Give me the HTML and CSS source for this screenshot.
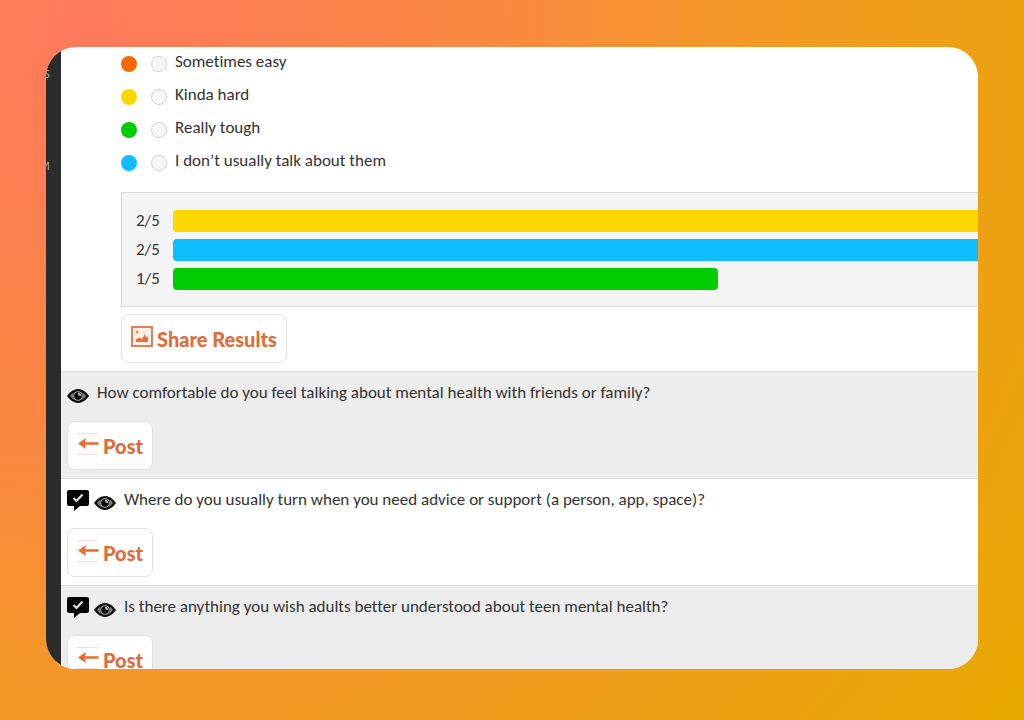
FILE: index.html
```html
<!DOCTYPE html>
<html lang="en">
<head>
    <meta charset="UTF-8" />
    <meta name="viewport" content="width=device-width, initial-scale=1.0" />
    <title>Poll Results</title>
    <link rel="stylesheet" href="styles.css">
</head>
<body>
    <!-- Shared icons -->
    <svg class="icon-defs" width="0" height="0" aria-hidden="true">
        <symbol id="icon-eye" viewBox="0 0 22 16">
            <path d="M0 8 Q5 1 11 1 T22 8 Q17 15 11 15 T0 8Z" fill="#0a0a0a" />
            <path d="M3 8 Q4 5.500 6.500 4.500 Q5 8 7.500 12 Q5 11 3 8Z M19 8 Q18 5.500 15.500 4.500 Q17 8 14.500 12 Q17 11 19 8Z" fill="#777" />
            <circle cx="11" cy="8" r="4.200" fill="none" stroke="#bbb" stroke-width="1.2" />
            <circle cx="11" cy="8" r="3.700" fill="#0a0a0a" />
            <path d="M11 4.500 Q14 5 14.300 8 L11.500 7.500Z" fill="#ccc" />
        </symbol>
        <symbol id="icon-check" viewBox="0 0 22 21">
            <path d="M2 0 H20 Q22 0 22 2 V14 Q22 16 20 16 H13 L7 21 V16 H2 Q0 16 0 14 V2 Q0 0 2 0Z" fill="#050505" />
            <path d="M6.500 8 L9.500 11 L15.500 4.500" fill="none" stroke="#e6e6e6" stroke-width="2" />
        </symbol>
        <symbol id="icon-arrow" viewBox="0 0 22 22">
            <path d="M0 .5 H21 M0 21.500 H21" stroke="#f5ded4" />
            <path d="M1 10.500 L9 5 L8 9.200 H21.500 V11.800 H8 L9 16Z" fill="#e96b30" />
        </symbol>
    </svg>

    <div class="window">
        <nav class="sidebar">
            <span>S</span>
            <span>M</span>
        </nav>

        <main class="feed">
            <section class="poll">
                <div class="option">
                    <span class="dot orange"></span>
                    <input type="radio" name="answer" id="answer-1" />
                    <label for="answer-1">Sometimes easy</label>
                </div>
                <div class="option">
                    <span class="dot yellow"></span>
                    <input type="radio" name="answer" id="answer-2" />
                    <label for="answer-2">Kinda hard</label>
                </div>
                <div class="option">
                    <span class="dot green"></span>
                    <input type="radio" name="answer" id="answer-3" />
                    <label for="answer-3">Really tough</label>
                </div>
                <div class="option">
                    <span class="dot blue"></span>
                    <input type="radio" name="answer" id="answer-4" />
                    <label for="answer-4">I don’t usually talk about them</label>
                </div>

                <div class="results">
                    <div class="result">
                        <span class="count">2/5</span>
                        <div class="track"><div class="bar yellow" style="width: 100%"></div></div>
                    </div>
                    <div class="result">
                        <span class="count">2/5</span>
                        <div class="track"><div class="bar blue" style="width: 100%"></div></div>
                    </div>
                    <div class="result">
                        <span class="count">1/5</span>
                        <div class="track"><div class="bar green" style="width: 50%"></div></div>
                    </div>
                </div>

                <button type="button" class="btn">
                    <svg width="22" height="22" viewBox="0 0 22 22" aria-hidden="true">
                        <rect x="1" y="1" width="20" height="19" fill="#fff0e8" stroke="#dd7448" stroke-width="1.8" />
                        <circle cx="6" cy="6" r="1.500" fill="#e58a63" />
                        <path d="M5 16 V13.500 L8 11.500 L11 13 L14 8 L15 12 L17 10 V16Z" fill="#e2703f" />
                    </svg>
                    Share Results
                </button>
            </section>

            <section class="question shaded">
                <div class="question-line">
                    <svg class="eye" width="22" height="16" aria-hidden="true"><use href="#icon-eye" /></svg>
                    <p>How comfortable do you feel talking about mental health with friends or family?</p>
                </div>
                <button type="button" class="btn">
                    <svg width="22" height="22" aria-hidden="true"><use href="#icon-arrow" /></svg>
                    Post
                </button>
            </section>

            <section class="question">
                <div class="question-line">
                    <svg width="22" height="21" aria-hidden="true"><use href="#icon-check" /></svg>
                    <svg class="eye" width="22" height="16" aria-hidden="true"><use href="#icon-eye" /></svg>
                    <p>Where do you usually turn when you need advice or support (a person, app, space)?</p>
                </div>
                <button type="button" class="btn">
                    <svg width="22" height="22" aria-hidden="true"><use href="#icon-arrow" /></svg>
                    Post
                </button>
            </section>

            <section class="question shaded">
                <div class="question-line">
                    <svg width="22" height="21" aria-hidden="true"><use href="#icon-check" /></svg>
                    <svg class="eye" width="22" height="16" aria-hidden="true"><use href="#icon-eye" /></svg>
                    <p>Is there anything you wish adults better understood about teen mental health?</p>
                </div>
                <button type="button" class="btn">
                    <svg width="22" height="22" aria-hidden="true"><use href="#icon-arrow" /></svg>
                    Post
                </button>
            </section>
        </main>
    </div>
</body>
</html>
```

FILE: styles.css
```css
* {
    box-sizing: border-box;
}

body {
    margin: 0;
    padding: 47px 46px 51px;
    height: 100vh;
    display: flex;
    font-family: Carlito, Lato, sans-serif;
    font-size: 17px;
    line-height: 20px;
    font-variant-ligatures: none;
    color: #333;
    background: radial-gradient(circle at 8% 5%, #ff795c 0%, #fa8a40 36%, #f39a24 59%, #eda112 81%, #e8aa00 100%);
}

.icon-defs {
    display: none;
}

/* Rounded window, cuts off whatever runs past it */
.window {
    flex: 1;
    min-width: 0;
    display: flex;
    overflow: hidden;
    border-radius: 30px;
    background: #fff;
}

/* Left strip */
.sidebar {
    flex: none;
    width: 15px;
    display: flex;
    flex-direction: column;
    align-items: flex-end;
    gap: 72px;
    padding-top: 17px;
    background: #2b2b2b;
    color: #aaa;
    font-family: Lato, sans-serif;
    font-size: 12px;
}

.sidebar span {
    margin-right: 11px;
}

.feed {
    flex: 1;
    min-width: 0;
}

/* Poll with its answers */
.poll {
    height: 324px;
    padding-left: 60px;
}

.option {
    display: flex;
    align-items: center;
    height: 33px;
}

.dot {
    width: 16px;
    height: 16px;
    margin-right: 14px;
    border-radius: 50%;
}

.option input {
    appearance: none;
    width: 16px;
    height: 16px;
    margin: 0 8px 0 0;
    border: 1px solid #d2d2d6;
    border-radius: 50%;
    background: #f7f7f7;
}

.option label {
    padding-bottom: 4px;
}

.orange {
    background: #f96900;
}

.yellow {
    background: #ffd800;
}

.green {
    background: #00cd00;
}

.blue {
    background: #0dbdff;
}

/* Result bars */
.results {
    display: flex;
    flex-direction: column;
    gap: 7px;
    width: max-content;
    margin: 13px 0 7px;
    padding: 17px 14px 16px;
    border: 1px solid #d8d8dc;
    background: #f4f4f4;
}

.result {
    display: flex;
    align-items: center;
}

.count {
    width: 37px;
}

.track {
    width: 1090px;
}

.bar {
    height: 22px;
    border-radius: 4px;
}

/* Buttons */
.btn {
    display: flex;
    align-items: center;
    gap: 4px;
    height: 49px;
    padding: 0 9px;
    border: 1px solid #e2e2e2;
    border-radius: 8px;
    background: #fff;
    color: #dd6d3a;
    font-family: Lato, sans-serif;
    font-size: 20px;
    font-weight: 900;
    line-height: 24px;
}

.btn svg {
    margin-bottom: 4px;
}

/* Question rows */
.question {
    height: 107px;
    padding: 10px 6px 0;
    border-top: 1px solid #dcdcdc;
}

.shaded {
    background: #ededed;
}

.question-line {
    display: flex;
    align-items: center;
    gap: 5px;
    height: 22px;
    margin-bottom: 17px;
}

.question-line p {
    margin: 0 0 0 3px;
    white-space: nowrap;
}

.eye {
    margin-top: 5px;
}
```
